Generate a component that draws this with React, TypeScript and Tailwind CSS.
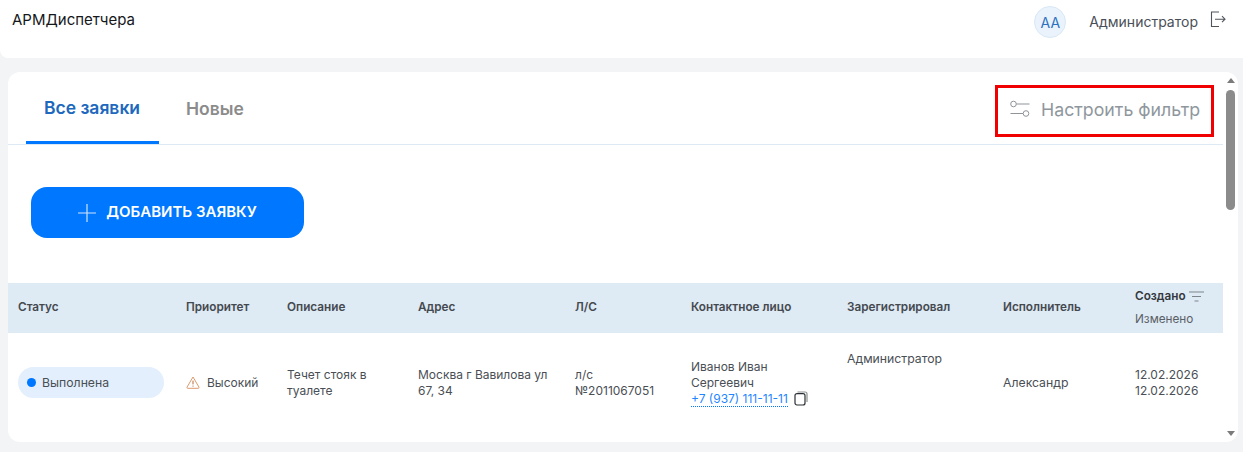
import React from "react";

const rowGrid =
  "grid grid-cols-[168px_101px_131px_157px_116px_156px_156px_132px_1fr] pl-[10px]";

const LogoutIcon = () => (
  <svg width="16" height="17" viewBox="0 0 16 17" fill="none" stroke="#4f555c" strokeWidth="1.1">
    <path d="M9 1H1.5V15.5H9" />
    <path d="M5 8.2H15M12 5.2L15 8.2L12 11.2" />
  </svg>
);

const FilterIcon = () => (
  <svg className="mb-[3px]" width="20" height="18" viewBox="0 0 20 18" fill="none" stroke="#8f9499" strokeWidth="1">
    <circle cx="3.5" cy="4" r="2.8" />
    <path d="M6.5 4H19.5" />
    <circle cx="16" cy="13.5" r="2.8" />
    <path d="M0.5 13.5H13" />
  </svg>
);

const SortIcon = () => (
  <svg width="15" height="11" viewBox="0 0 15 11" fill="none" stroke="#7d858d" strokeWidth="1">
    <path d="M0 1H15M3 5.5H12M5.5 10H9.5" />
  </svg>
);

const WarnIcon = () => (
  <svg width="14" height="13" viewBox="0 0 14 13" fill="none" stroke="#dc9a6c" strokeWidth="1">
    <path d="M7 1L13 11.2C13.2 11.7 13 12.3 12.3 12.3H1.7C1 12.3 0.8 11.7 1 11.2L7 1Z" strokeLinejoin="round" />
    <path d="M7 4.6V8.4M7 9.6V10.6" stroke="#b5683a" />
  </svg>
);

const CopyIcon = () => (
  <svg width="14" height="15" viewBox="0 0 14 15" fill="none" stroke="#2b2f33" strokeWidth="1.2">
    <rect x="1" y="2.6" width="10" height="11.4" rx="2" />
    <path d="M3.5 1H11C12.2 1 13 1.8 13 3V11" stroke="#8a8d90" />
  </svg>
);

const Scrollbar = () => (
  <div className="w-[15px] flex flex-col items-center pt-[6px] pb-[6px]">
    <div className="w-0 h-0 border-x-[4.5px] border-x-transparent border-b-[5px] border-b-[#7b7b7b]" />
    <div className="w-[9px] h-[120px] mt-[7px] rounded-full bg-[#8b8b8b]" />
    <div className="flex-1" />
    <div className="w-0 h-0 border-x-[4.5px] border-x-transparent border-t-[5px] border-t-[#7b7b7b]" />
  </div>
);

export default function App() {
  return (
    <div className="h-screen overflow-hidden bg-[#f2f4f6] font-['Inter',sans-serif]">
      {/* Top bar */}
      <header className="h-[58px] bg-white rounded-bl-lg flex items-start pl-3 pr-[17px]">
        <div className="pt-[10px] text-[15px] leading-[20px] text-[#15171a]">АРМДиспетчера</div>
        <div className="ml-auto flex items-start">
          <div className="mt-[6px] w-8 h-8 rounded-full bg-[#eaf3fb] border border-[#d8e8f5] flex items-center justify-center text-[14px] text-[#2c72c0]">
            АА
          </div>
          <div className="ml-[23px] pt-[12px] text-[14px] leading-[20px] text-[#4a4f57]">Администратор</div>
          <div className="ml-3 pt-[11px]">
            <LogoutIcon />
          </div>
        </div>
      </header>

      <div className="pl-2 pr-[5px] pt-[14px]">
        <div className="h-[370px] bg-white rounded-xl flex overflow-hidden">
          <div className="flex-1 min-w-0">
            {/* Tabs */}
            <div className="h-[73px] border-b border-[#dde9f5] pl-[18px] pr-[9px] flex">
              <div className="w-[133px] h-[72px] border-b-[3px] border-[#0077ff] flex items-center justify-center pt-[3px] pr-[1px] text-[17.5px] font-semibold text-[#2068bd]">
                Все заявки
              </div>
              <div className="ml-[27px] h-[72px] flex items-center pt-[2px] text-[17.5px] font-semibold text-[#8b8b8b]">
                Новые
              </div>
              <div className="ml-auto mt-[13px] w-[219px] h-[52px] border-[3px] border-[#f00000] flex items-center pl-3 gap-[11px] pb-[1px] text-[17.75px] text-[#8f979e]">
                <FilterIcon />
                Настроить фильтр
              </div>
            </div>

            <div className="pt-[42px] pl-[23px]">
              <button className="w-[273px] h-[51px] rounded-2xl bg-[#0077ff] text-white flex items-center justify-center gap-[10px] text-[15px] font-semibold">
                <svg width="18" height="18" viewBox="0 0 18 18" fill="none" stroke="#cfe4ff" strokeWidth="1.2">
                  <path d="M9 0V18M0 9H18" />
                </svg>
                ДОБАВИТЬ ЗАЯВКУ
              </button>
            </div>

            {/* Table head */}
            <div className={`${rowGrid} mt-[45px] h-[50px] bg-[#deeaf4] items-center pb-[1px] text-[11.75px] font-semibold text-[#44494f]`}>
              <div>Статус</div>
              <div>Приоритет</div>
              <div>Описание</div>
              <div>Адрес</div>
              <div>Л/С</div>
              <div>Контактное лицо</div>
              <div>Зарегистрировал</div>
              <div>Исполнитель</div>
              <div>
                <div className="flex items-center gap-[3px] leading-[16px] text-[#34383d]">
                  Создано
                  <SortIcon />
                </div>
                <div className="mt-[7px] leading-[16px] font-normal text-[#5a6066]">Изменено</div>
              </div>
            </div>

            {/* Table row */}
            <div className={`${rowGrid} h-[99px] items-center text-[12px] leading-[16px] text-[#4a4f55]`}>
              <div className="text-[12.25px]">
                <div className="w-[146px] h-[31px] rounded-full bg-[#e3effc] flex items-center pl-[9px] gap-[6px]">
                  <span className="w-[9px] h-[9px] rounded-full bg-[#0077ff]" />
                  Выполнена
                </div>
              </div>
              <div className="flex items-center gap-[7px]">
                <WarnIcon />
                Высокий
              </div>
              <div className="pr-6">Течет стояк в туалете</div>
              <div className="pr-6">Москва г Вавилова ул 67, 34</div>
              <div className="pr-6">л/с №2011067051</div>
              <div className="pr-4">
                <div>Иванов Иван Сергеевич</div>
                <div className="flex items-center gap-[6px]">
                  <span className="text-[#1f86ff] border-b border-dotted border-[#0077ff] leading-[15px]">+7 (937) 111-11-11</span>
                  <CopyIcon />
                </div>
              </div>
              <div className="self-start pt-[18px] text-[12.25px]">Администратор</div>
              <div className="text-[12.25px]">Александр</div>
              <div>
                <div>12.02.2026</div>
                <div>12.02.2026</div>
              </div>
            </div>
          </div>
          <Scrollbar />
        </div>
      </div>
    </div>
  );
}
